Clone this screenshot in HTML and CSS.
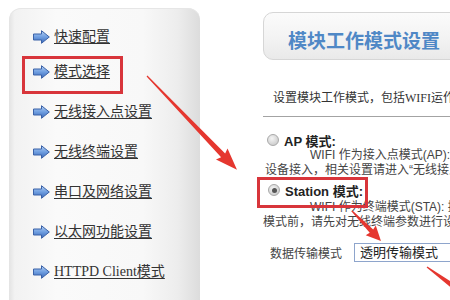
FILE: index.html
```html
<!DOCTYPE html>
<html lang="zh-CN">
<head>
<meta charset="utf-8">
<title>模块工作模式设置</title>
<link rel="stylesheet" href="styles.css">
</head>
<body>
<div class="page">
  <nav class="sidebar">
    <ul class="menu">
      <li class="item item-first"><span class="ico"><svg width="17" height="14" viewBox="0 0 17 14"><defs><linearGradient id="ag" x1="0" y1="0" x2="0" y2="1"><stop offset="0" stop-color="#b3d0f4"/><stop offset="0.5" stop-color="#6f9ee0"/><stop offset="1" stop-color="#3a68b8"/></linearGradient></defs><path d="M0.5 4 H8.5 V0.7 L16.3 7 L8.5 13.3 V10 H0.5 Z" fill="url(#ag)" stroke="#3b62a8" stroke-width="1"/></svg></span><a class="link">快速配置</a></li>
      <li class="item item-marked"><span class="ico"><svg width="17" height="14" viewBox="0 0 17 14"><path d="M0.5 4 H8.5 V0.7 L16.3 7 L8.5 13.3 V10 H0.5 Z" fill="url(#ag)" stroke="#3b62a8" stroke-width="1"/></svg></span><a class="link">模式选择</a></li>
      <li class="item"><span class="ico"><svg width="17" height="14" viewBox="0 0 17 14"><path d="M0.5 4 H8.5 V0.7 L16.3 7 L8.5 13.3 V10 H0.5 Z" fill="url(#ag)" stroke="#3b62a8" stroke-width="1"/></svg></span><a class="link">无线接入点设置</a></li>
      <li class="item"><span class="ico"><svg width="17" height="14" viewBox="0 0 17 14"><path d="M0.5 4 H8.5 V0.7 L16.3 7 L8.5 13.3 V10 H0.5 Z" fill="url(#ag)" stroke="#3b62a8" stroke-width="1"/></svg></span><a class="link">无线终端设置</a></li>
      <li class="item"><span class="ico"><svg width="17" height="14" viewBox="0 0 17 14"><path d="M0.5 4 H8.5 V0.7 L16.3 7 L8.5 13.3 V10 H0.5 Z" fill="url(#ag)" stroke="#3b62a8" stroke-width="1"/></svg></span><a class="link">串口及网络设置</a></li>
      <li class="item"><span class="ico"><svg width="17" height="14" viewBox="0 0 17 14"><path d="M0.5 4 H8.5 V0.7 L16.3 7 L8.5 13.3 V10 H0.5 Z" fill="url(#ag)" stroke="#3b62a8" stroke-width="1"/></svg></span><a class="link">以太网功能设置</a></li>
      <li class="item"><span class="ico"><svg width="17" height="14" viewBox="0 0 17 14"><path d="M0.5 4 H8.5 V0.7 L16.3 7 L8.5 13.3 V10 H0.5 Z" fill="url(#ag)" stroke="#3b62a8" stroke-width="1"/></svg></span><a class="link">HTTPD Client模式</a></li>
    </ul>
  </nav>

  <main class="content">
    <div class="title-box"><h1 class="title">模块工作模式设置</h1></div>
    <p class="desc">设置模块工作模式，包括WIFI运作模式和数据传输模式。</p>
    <div class="rule"></div>

    <section class="mode">
      <div class="mode-head"><span class="radio"></span><b class="mode-name">AP 模式:</b></div>
      <p class="mode-desc mode-desc-ap">WIFI 作为接入点模式(AP): 其他无线<br>设备接入，相关设置请进入“无线接入点设置”</p>
    </section>

    <section class="mode">
      <div class="mode-head mode-head-marked"><span class="radio radio-on"></span><b class="mode-name">Station 模式:</b></div>
      <p class="mode-desc mode-desc-sta">WIFI 作为终端模式(STA): 接入其他无线<br>模式前，请先对无线终端参数进行设置</p>
    </section>

    <div class="field">
      <span class="field-label">数据传输模式</span>
      <div class="select">透明传输模式</div>
    </div>
  </main>

  <svg class="annot" width="450" height="300" viewBox="0 0 450 300">
    <g fill="#e5372f">
      <polygon transform="translate(147 76) rotate(46.2)" points="0,-0.6 110,-2.8 108,-8 130,0 108,8 110,2.8 0,0.6"/>
      <polygon transform="translate(352 211) rotate(46)" points="0,-0.6 28,-2.4 27,-7 41.7,0 27,7 28,2.4 0,0.6"/>
      <polygon transform="translate(427 267) rotate(36)" points="0,-0.6 34,-2.6 34,2.6 0,0.6"/>
    </g>
  </svg>
</div>
</body>
</html>
```

FILE: styles.css
```css
* { box-sizing: border-box; }

html, body {
  margin: 0;
  padding: 0;
  background: #ffffff;
}

body {
  width: 450px;
  height: 300px;
  overflow: hidden;
  font-family: "Liberation Sans", "Noto Sans CJK SC", sans-serif;
  color: #333333;
}

.page {
  position: relative;
  width: 450px;
  height: 300px;
  display: flex;
  align-items: flex-start;
}

/* ---------- sidebar ---------- */
.sidebar {
  flex: none;
  width: 191px;
  height: 300px;
  margin: 8px 0 0 9px;
  border-radius: 12px 12px 0 0;
  background: linear-gradient(to right, #e3e3e3 0, #f2f2f2 3%, #fafafa 25%, #f8f8f8 70%, #ededed 88%, #dcdcdc 100%);
  box-shadow: inset 0 1px 0 #e6e6e6;
  padding: 21px 0 0 24px;
}

.menu {
  list-style: none;
  margin: 0;
  padding: 0;
  display: flex;
  flex-direction: column;
  gap: 24px;
}

.item {
  position: relative;
  display: flex;
  align-items: center;
  height: 16px;
  font-family: "Liberation Serif", "Noto Sans CJK SC", serif;
  font-size: 14px;
  line-height: 16px;
}

.item-first { margin-bottom: -5px; }

.ico {
  display: flex;
  width: 17px;
  height: 14px;
  margin-right: 4px;
}

.link {
  color: #333333;
  text-decoration: underline;
  text-underline-offset: 2px;
  white-space: nowrap;
}

.item-marked::after {
  content: "";
  position: absolute;
  left: -11px;
  top: -8px;
  width: 95px;
  height: 32px;
  border: 3px solid #d8353b;
}

/* ---------- content ---------- */
.content {
  flex: none;
  width: 260px;
  margin-left: 63px;
  display: flex;
  flex-direction: column;
}

.title-box {
  margin-top: 12px;
  height: 48px;
  width: 240px;
  border: 1px solid #d6d6d6;
  border-radius: 10px;
  background: linear-gradient(to bottom, #fbfbfb 0, #f3f3f3 55%, #e9e9e9 100%);
  padding: 15px 0 0 24px;
}

.title {
  margin: 0;
  font-size: 19px;
  line-height: 24px;
  font-weight: bold;
  color: #4f88c6;
  font-family: "Noto Sans CJK SC", sans-serif;
  white-space: nowrap;
}

.desc {
  margin: 30px 0 0 0;
  padding-left: 10px;
  font-family: "Liberation Serif", "Noto Sans CJK SC", serif;
  font-size: 12px;
  line-height: 16px;
  color: #333333;
  white-space: nowrap;
}

.rule {
  margin-top: 10px;
  height: 1px;
  width: 240px;
  background: #a3a3a3;
}

.mode {
  display: flex;
  flex-direction: column;
}

.mode-head {
  position: relative;
  display: flex;
  align-items: center;
  height: 16px;
  margin-top: 15px;
  padding-left: 4px;
}

.mode-head-marked {
  margin-top: 4px;
  padding-left: 5px;
}

.mode-head-marked::after {
  content: "";
  position: absolute;
  left: -6px;
  top: -5px;
  width: 105px;
  height: 25px;
  border: 3px solid #d8353b;
}

.radio {
  width: 12px;
  height: 12px;
  border-radius: 50%;
  border: 1px solid #a9a9a9;
  background: radial-gradient(circle at 40% 35%, #f4f4f4 0, #d6d6d6 60%, #c4c4c4 100%);
  margin-right: 5px;
  position: relative;
}

.radio-on::after {
  content: "";
  position: absolute;
  left: 2.5px;
  top: 2.5px;
  width: 5px;
  height: 5px;
  border-radius: 50%;
  background: #555555;
}

.mode-name {
  font-size: 13px;
  font-weight: bold;
  color: #222222;
  white-space: nowrap;
  font-family: "Liberation Sans", "Noto Sans CJK SC", sans-serif;
}

.mode-desc {
  margin: 0;
  font-size: 12px;
  line-height: 15px;
  color: #444444;
  white-space: nowrap;
}

.mode-desc-ap {
  padding-left: 2px;
  text-indent: 45px;
}

.mode-desc-sta {
  margin-top: 2px;
  text-indent: 47px;
}

.field {
  display: flex;
  align-items: center;
  margin-top: 13px;
  padding-left: 7px;
  height: 19px;
}

.field-label {
  font-size: 12px;
  color: #444444;
  width: 84px;
  white-space: nowrap;
}

.select {
  height: 19px;
  width: 150px;
  border: 1px solid #8ea5cc;
  background: #ffffff;
  padding-left: 5px;
  font-size: 13px;
  line-height: 17px;
  color: #222222;
  white-space: nowrap;
}

/* ---------- annotations ---------- */
.annot {
  position: absolute;
  left: 0;
  top: 0;
  pointer-events: none;
}
```
